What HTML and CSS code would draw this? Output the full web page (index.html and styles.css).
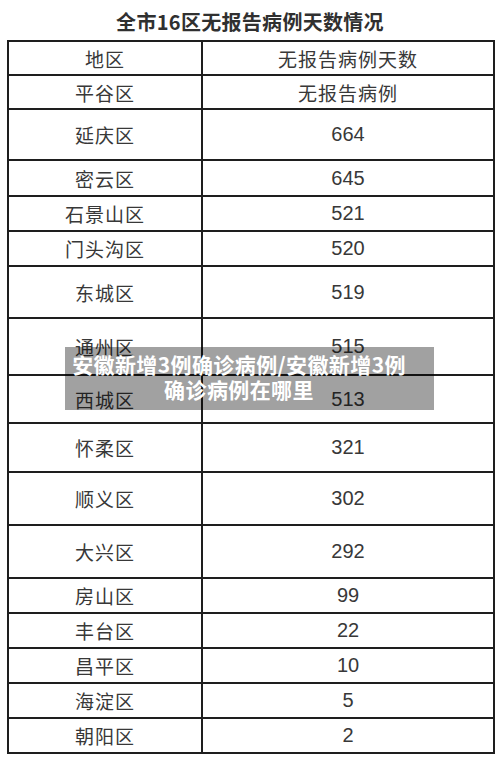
FILE: index.html
```html
<!DOCTYPE html>
<html lang="zh-CN">
<head>
<meta charset="utf-8">
<title>全市16区无报告病例天数情况</title>
<link rel="stylesheet" href="styles.css">
</head>
<body>
<div class="page">
  <div class="title">全市16区无报告病例天数情况</div>
  <div class="table">
    <div class="row h32"><div class="cell name">地区</div><div class="cell val cjk">无报告病例天数</div></div>
    <div class="row h34"><div class="cell name">平谷区</div><div class="cell val cjk">无报告病例</div></div>
    <div class="row h51"><div class="cell name">延庆区</div><div class="cell val">664</div></div>
    <div class="row h36"><div class="cell name">密云区</div><div class="cell val">645</div></div>
    <div class="row h35"><div class="cell name">石景山区</div><div class="cell val">521</div></div>
    <div class="row h35"><div class="cell name">门头沟区</div><div class="cell val">520</div></div>
    <div class="row h52"><div class="cell name">东城区</div><div class="cell val">519</div></div>
    <div class="row h57"><div class="cell name">通州区</div><div class="cell val">515</div></div>
    <div class="row h48"><div class="cell name">西城区</div><div class="cell val">513</div></div>
    <div class="row h49"><div class="cell name">怀柔区</div><div class="cell val">321</div></div>
    <div class="row h53"><div class="cell name">顺义区</div><div class="cell val">302</div></div>
    <div class="row h53"><div class="cell name">大兴区</div><div class="cell val">292</div></div>
    <div class="row h35"><div class="cell name">房山区</div><div class="cell val">99</div></div>
    <div class="row h35"><div class="cell name">丰台区</div><div class="cell val">22</div></div>
    <div class="row h35"><div class="cell name">昌平区</div><div class="cell val">10</div></div>
    <div class="row h35"><div class="cell name">海淀区</div><div class="cell val">5</div></div>
    <div class="row h35"><div class="cell name">朝阳区</div><div class="cell val">2</div></div>
  </div>
  <div class="banner">
    <span class="line">安徽新增3例确诊病例/安徽新增3例</span>
    <span class="line">确诊病例在哪里</span>
  </div>
</div>
</body>
</html>
```

FILE: styles.css
```css
html, body {
  margin: 0;
  padding: 0;
  background: #ffffff;
}

.page {
  position: relative;
  width: 500px;
  height: 757px;
  overflow: hidden;
  font-family: "Liberation Sans", "Noto Sans CJK SC", sans-serif;
  color: #383838;
}

.title {
  height: 40px;
  line-height: 44px;
  text-align: center;
  font-family: "Noto Sans CJK SC", sans-serif;
  font-weight: 700;
  font-size: 20px;
  color: #303030;
  letter-spacing: 0.3px;
}

.table {
  margin-left: 7px;
  width: 488px;
  box-sizing: border-box;
  border: 2px solid #1e1e1e;
}

.row {
  display: grid;
  grid-template-columns: 194px 1fr;
  box-sizing: border-box;
  border-top: 2px solid #1e1e1e;
}

.row:first-child {
  border-top: none;
}

.cell {
  display: flex;
  align-items: center;
  justify-content: center;
  font-size: 20px;
}

.name {
  border-right: 2px solid #1e1e1e;
  font-family: "Noto Sans CJK SC", sans-serif;
  font-size: 19px;
  letter-spacing: 1px;
}

.cjk {
  font-family: "Noto Sans CJK SC", sans-serif;
  font-size: 19px;
  letter-spacing: 1px;
}

.h32 { height: 32px; }
.h34 { height: 34px; }
.h35 { height: 35px; }
.h36 { height: 36px; }
.h48 { height: 48px; }
.h49 { height: 49px; }
.h51 { height: 51px; }
.h52 { height: 52px; }
.h53 { height: 53px; }
.h57 { height: 57px; }

.banner {
  position: absolute;
  left: 65px;
  top: 347px;
  width: 369px;
  height: 63px;
  box-sizing: border-box;
  padding: 5px 21px 0 0;
  background: rgba(0, 0, 0, 0.37);
  text-align: center;
  font-family: "Noto Sans CJK SC", sans-serif;
  font-weight: 700;
  font-size: 21px;
  letter-spacing: 0.4px;
  line-height: 25px;
  color: #ffffff;
}

.line {
  display: block;
  white-space: nowrap;
}
```
